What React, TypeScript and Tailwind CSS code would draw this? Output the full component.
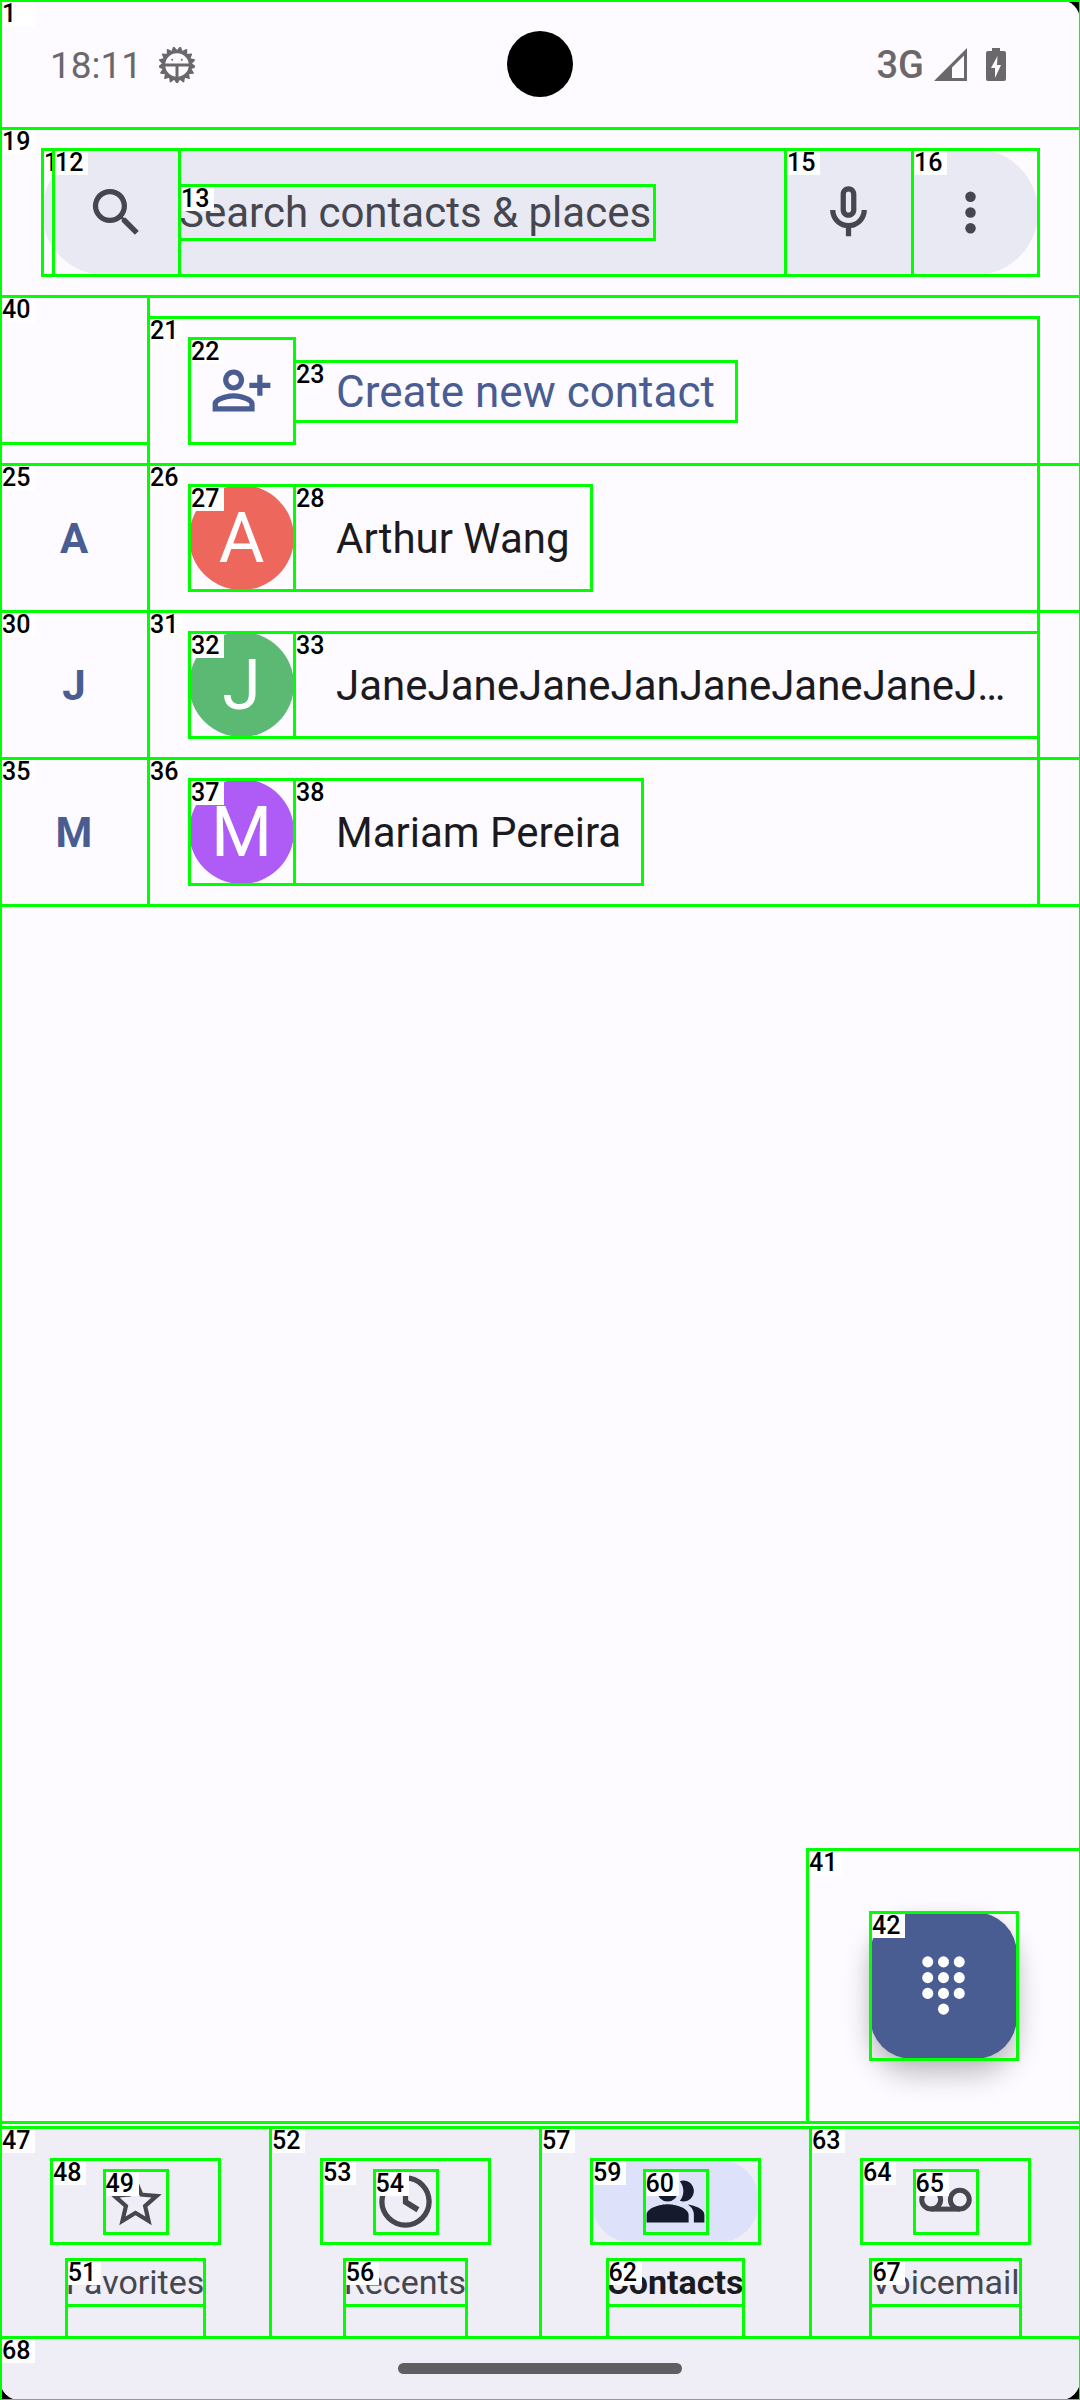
import type { ReactNode } from "react";

/* Inspector frame: fills its nearest positioned parent. */
function Frame({ id }: { id?: string }) {
  return (
    <span aria-hidden="true" className="pointer-events-none absolute -top-px -right-0.5 -bottom-0.5 -left-px border-3 border-[#00ff00]">
      {id && (
        <span className="block h-6 w-[33px] bg-white text-left font-[Roboto,sans-serif] text-[25px] leading-6 font-medium text-black">
          {id}
        </span>
      )}
    </span>
  );
}

function Icon({ children, className = "" }: { children: ReactNode; className?: string }) {
  return (
    <svg viewBox="0 0 24 24" fill="currentColor" aria-hidden="true" className={`size-[63px] shrink-0 ${className}`}>
      {children}
    </svg>
  );
}

const TEETH = 17;
const gear = Array.from({ length: TEETH * 2 }, (_, i) => {
  const a = (Math.PI * i) / TEETH + Math.PI / 2;
  const r = i % 2 === 0 ? 18 : 14;
  return `${(18 + r * Math.cos(a)).toFixed(2)},${(18 + r * Math.sin(a)).toFixed(2)}`;
}).join(" ");

function StatusBar() {
  return (
    <header className="relative flex h-32 items-center justify-between pt-0.5 pr-[74px] pl-[50px] text-[#6a686b]">
      <div className="flex items-center gap-[17px]">
        <time className="text-[37px] leading-none">18:11</time>
        <svg viewBox="0 0 36 36" className="size-9" aria-hidden="true">
          <polygon points={gear} fill="currentColor" stroke="currentColor" strokeWidth="1.5" strokeLinejoin="round" />
          <circle cx="18" cy="18" r="11.8" fill="#fdfbff" />
          <path d="M5 16.5h26v3H5zM16.5 18h3v13h-3z" fill="currentColor" />
          <circle cx="13.2" cy="12.8" r="1" fill="currentColor" />
          <circle cx="22.8" cy="12.8" r="1" fill="currentColor" />
        </svg>
      </div>
      <span className="absolute top-[31px] left-1/2 size-[66px] -translate-x-1/2 rounded-full bg-black" />
      <div className="flex items-center">
        <span className="text-[38px] leading-none font-medium">3G</span>
        <svg viewBox="0 0 34 34" className="ml-2.5 size-[34px]" aria-hidden="true">
          <path d="M0 33 33 0v33zM18 30h12V7.500L18 19.500z" fill="currentColor" fillRule="evenodd" />
        </svg>
        <svg viewBox="0 0 20 34" className="ml-[18px] h-[34px] w-5" aria-hidden="true">
          <path d="M6 0h8v3h4q2 0 2 2v26q0 2-2 2H2q-2 0-2-2V5q0-2 2-2h4z" fill="currentColor" />
          <path d="M11.500 8 5 20h4v10l6-13h-4z" fill="#fdfbff" />
        </svg>
      </div>
    </header>
  );
}

function SearchBar() {
  return (
    <div className="relative px-[42px] py-[21px]">
      <Frame id="19" />
      <form className="relative flex h-[126px] items-center rounded-full bg-[#e8e9f2] pl-[11px] text-[#46464f]">
        <Frame id="11" />
        <button type="button" aria-label="Search" className="relative grid h-full w-[126px] shrink-0 place-items-center">
          <Icon>
            <path d="M15.500 14h-.79l-.28-.27A6.470 6.470 0 0 0 16 9.500 6.500 6.500 0 1 0 9.500 16c1.610 0 3.090-.59 4.230-1.570l.27.28v.79l5 4.990L20.490 19zm-6 0C7.010 14 5 11.990 5 9.500S7.010 5 9.500 5 14 7.010 14 9.500 11.990 14 9.500 14z" />
          </Icon>
          <Frame id="12" />
        </button>
        <div className="flex h-full min-w-0 flex-1 items-center">
          <div className="relative w-[475px]">
            <input
              type="text"
              aria-label="Search contacts & places"
              placeholder="Search contacts & places"
              className="block h-[54px] w-full bg-transparent text-[42px] outline-none placeholder:text-[#46464f] placeholder:opacity-100"
            />
            <Frame id="13" />
          </div>
        </div>
        <button type="button" aria-label="Voice search" className="relative grid h-full w-[127px] shrink-0 place-items-center">
          <Icon>
            <path d="M12 14c1.660 0 3-1.340 3-3V5c0-1.660-1.340-3-3-3S9 3.340 9 5v6c0 1.660 1.340 3 3 3zm-1-9c0-.55.45-1 1-1s1 .45 1 1v6c0 .55-.45 1-1 1s-1-.45-1-1V5zm6 6c0 2.760-2.240 5-5 5s-5-2.240-5-5H5c0 3.530 2.610 6.430 6 6.920V21h2v-3.080c3.390-.49 6-3.390 6-6.920h-2z" />
          </Icon>
          <Frame id="15" />
        </button>
        <button type="button" aria-label="More options" className="relative grid h-full w-[126px] shrink-0 place-items-center pr-[10px]">
          <Icon>
            <circle cx="12" cy="6" r="2" />
            <circle cx="12" cy="12" r="2" />
            <circle cx="12" cy="18" r="2" />
          </Icon>
          <Frame id="16" />
        </button>
      </form>
    </div>
  );
}

const contacts = [
  { letter: "A", name: "Arthur Wang", color: "bg-[#ed675c]", ids: ["25", "26", "27", "28"] },
  { letter: "J", name: "JaneJaneJaneJanJaneJaneJaneJaneJane", color: "bg-[#5bb974]", ids: ["30", "31", "32", "33"] },
  { letter: "M", name: "Mariam Pereira", color: "bg-[#af5cf7]", ids: ["35", "36", "37", "38"] },
];

function ContactList() {
  return (
    <ul className="text-[42px] leading-none">
      <li className="flex pr-[42px]">
        <div className="relative h-[147px] w-[148px] shrink-0">
          <Frame id="40" />
        </div>
        <div className="relative min-w-0 flex-1 pt-[21px]">
          <button type="button" className="relative flex h-[147px] w-full items-center pl-[41px] text-[#495d92]">
            <Frame id="21" />
            <span className="relative grid size-[105px] shrink-0 place-items-center">
              <Icon>
                <path d="M13 8c0-2.210-1.790-4-4-4S5 5.790 5 8s1.790 4 4 4 4-1.790 4-4zm-2 0c0 1.100-.9 2-2 2s-2-.9-2-2 .9-2 2-2 2 .9 2 2zM9 13c-2.670 0-8 1.340-8 4v3h16v-3c0-2.660-5.330-4-8-4zm6 5H3v-.99C3.200 16.290 6.300 15 9 15s5.800 1.290 6 2zM18 6v3h-3v2h3v3h2v-3h3V9h-3V6z" />
              </Icon>
              <Frame id="22" />
            </span>
            <span className="relative flex h-[60px] items-center pt-[3px] pr-[21px] pl-[42px] text-[44px]">
              <Frame id="23" />
              Create new contact
            </span>
          </button>
        </div>
      </li>
      {contacts.map((c) => (
        <li key={c.letter} className="relative flex pr-[42px]">
          <Frame id={c.ids[0]} />
          <h2 className="relative grid w-[148px] shrink-0 place-items-center pt-[3px] font-bold text-[#495d92]">{c.letter}</h2>
          <button type="button" className="relative flex h-[147px] min-w-0 flex-1 items-center pl-[41px] text-[#1b1b1f]">
            <Frame id={c.ids[1]} />
            <span className="relative size-[105px] shrink-0">
              <span className={`grid size-full place-items-center rounded-full text-[70px] text-white ${c.color}`}>{c.letter}</span>
              <Frame id={c.ids[2]} />
            </span>
            <span className="relative flex h-[105px] min-w-0 items-center pt-[3px] pr-[21px] pl-[42px]">
              <Frame id={c.ids[3]} />
              <span className="truncate leading-[60px]">{c.name}</span>
            </span>
          </button>
        </li>
      ))}
    </ul>
  );
}

const dialDots = [
  [6, 3], [12, 3], [18, 3],
  [6, 9], [12, 9], [18, 9],
  [6, 15], [12, 15], [18, 15],
  [12, 21],
];

function DialpadButton() {
  return (
    <div className="absolute right-0 bottom-0 p-[63px]">
      <Frame id="41" />
      <div className="relative">
        <button
          type="button"
          aria-label="Dialpad"
          className="grid size-[147px] place-items-center rounded-[42px] bg-[#495d92] text-white shadow-[0_16px_28px_rgba(0,0,0,0.24),0_2px_16px_rgba(0,0,0,0.06)]"
        >
          <Icon>
            {dialDots.map(([x, y]) => (
              <circle key={`${x}-${y}`} cx={x} cy={y} r="2.100" />
            ))}
          </Icon>
        </button>
        <Frame id="42" />
      </div>
    </div>
  );
}

const tabs = [
  {
    label: "Favorites",
    ids: ["47", "48", "49", "51"],
    icon: (
      <path d="M22 9.240l-7.190-.62L12 2 9.190 8.630 2 9.240l5.460 4.730L5.820 21 12 17.270 18.180 21l-1.630-7.030zM12 15.400l-3.760 2.270 1-4.280-3.320-2.880 4.380-.38L12 6.100l1.710 4.040 4.380.38-3.320 2.880 1 4.280z" />
    ),
  },
  {
    label: "Recents",
    ids: ["52", "53", "54", "56"],
    icon: (
      <path d="M12 2a10 10 0 1 0 0 20 10 10 0 0 0 0-20zm0 18a8 8 0 1 1 0-16 8 8 0 0 1 0 16zM11 6.500h2v5l4.300 2.700-1.100 1.900L11 12.900z" />
    ),
  },
  {
    label: "Contacts",
    active: true,
    ids: ["57", "59", "60", "62"],
    icon: (
      <path d="M16.670 13.130C18.040 14.060 19 15.320 19 17v3h4v-3c0-2.180-3.570-3.470-6.330-3.870zM9 4a4 4 0 1 0 0 8 4 4 0 0 0 0-8zM15 12c2.210 0 4-1.790 4-4s-1.790-4-4-4c-.47 0-.91.1-1.330.24C14.500 5.270 15 6.580 15 8s-.5 2.730-1.330 3.760c.42.14.86.24 1.330.24zM9 13c-2.670 0-8 1.340-8 4v3h16v-3c0-2.660-5.330-4-8-4z" />
    ),
  },
  {
    label: "Voicemail",
    ids: ["63", "64", "65", "67"],
    icon: (
      <g fill="none" stroke="currentColor" strokeWidth="1.900">
        <circle cx="6.550" cy="11.300" r="3.600" />
        <circle cx="17.450" cy="11.300" r="3.600" />
        <path d="M6.550 14.900h10.900" />
      </g>
    ),
  },
];

function BottomNav() {
  return (
    <nav className="relative mt-[5px] grid grid-cols-4 bg-[#efedf6]">
      {tabs.map((t) => (
        <button
          key={t.label}
          type="button"
          aria-current={t.active ? "page" : undefined}
          className={`relative flex h-[210px] flex-col items-center pt-8 ${t.active ? "text-[#151b2c]" : "text-[#46464f]"}`}
        >
          <Frame id={t.ids[0]} />
          <span className="relative">
            <span className={`grid h-[84px] w-[168px] place-items-center rounded-full ${t.active ? "bg-[#dde1f9]" : ""}`}>
              <Icon>{t.icon}</Icon>
            </span>
            <Frame id={t.ids[1]} />
            <span className="absolute inset-0 grid place-items-center">
              <span className="relative size-[63px]">
                <Frame id={t.ids[2]} />
              </span>
            </span>
          </span>
          <span className="relative mt-4 flex-1">
            <Frame />
            <span className={`relative block text-[34px] leading-[46px] ${t.active ? "font-bold text-[#1b1b1f]" : "font-normal"}`}>
              {t.label}
              <Frame id={t.ids[3]} />
            </span>
          </span>
        </button>
      ))}
    </nav>
  );
}

export default function App() {
  return (
    <div className="min-h-screen bg-black font-[Roboto,sans-serif]">
      <div className="relative flex min-h-screen flex-col overflow-hidden">
        <div className="flex flex-1 flex-col overflow-hidden rounded-[20px] bg-[#fdfbff]">
          <StatusBar />
          <SearchBar />
          <main className="relative flex-1">
            <Frame />
            <ContactList />
            <DialpadButton />
          </main>
          <BottomNav />
          <footer className="relative flex h-[63px] justify-center bg-[#efedf6] pt-[26px]">
            <Frame id="68" />
            <span className="h-[11px] w-[284px] rounded-full bg-[#5f5f61]" />
          </footer>
        </div>
        <Frame id="1" />
      </div>
    </div>
  );
}
